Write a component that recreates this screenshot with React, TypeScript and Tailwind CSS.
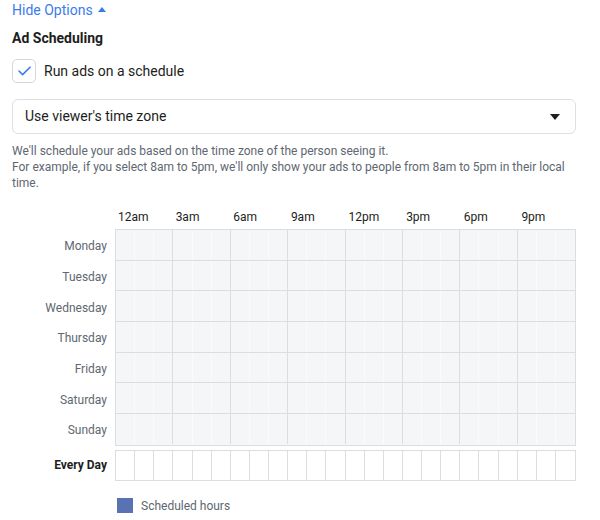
import React from "react";

const days = ["Monday", "Tuesday", "Wednesday", "Thursday", "Friday", "Saturday", "Sunday"];
const hours = ["12am", "3am", "6am", "9am", "12pm", "3pm", "6pm", "9pm"];
const cells = Array.from({ length: 24 }, (_, i) => i);

export default function App() {
  return (
    <div
      className="w-[600px] h-[520px] bg-white overflow-hidden pl-[12px] text-[#1c1e21]"
      style={{ fontFamily: "Roboto, 'Liberation Sans', Arial, sans-serif" }}
    >
      <div className="flex items-center h-[20px] text-[14px] text-[#3b7bec]">
        <span>Hide Options</span>
        <svg width="8" height="5" viewBox="0 0 8 5" className="ml-[5px] mb-[1px]">
          <path d="M0 5 L4 0 L8 5 Z" fill="#3b7bec" />
        </svg>
      </div>
      <div className="mt-[8px] h-[20px] flex items-center text-[14px] font-bold">Ad Scheduling</div>
      <div className="mt-[11px] flex items-center h-[24px]">
        <div className="w-[24px] h-[24px] rounded-[5px] border border-[#d3d6db] bg-white flex items-center justify-center">
          <svg width="13" height="10" viewBox="0 0 13 10">
            <path d="M1 5 L4.6 8.6 L12 1.2" fill="none" stroke="#3b7bec" strokeWidth="1.6" strokeLinecap="round" strokeLinejoin="round" />
          </svg>
        </div>
        <span className="ml-[8px] text-[14px] text-[#1c1e21]">Run ads on a schedule</span>
      </div>
      <div className="mt-[16px] w-[564px] h-[35px] rounded-[6px] border border-[#dddfe2] flex items-center justify-between pl-[12px] pr-[15px] text-[14px]">
        <span>Use viewer's time zone</span>
        <svg width="10" height="6" viewBox="0 0 10 6">
          <path d="M0 0 L10 0 L5 6 Z" fill="#1c1e21" />
        </svg>
      </div>
      <div className="mt-[9px] w-[563px] text-[12px] leading-[16px] text-[#606770]">
        <div>We'll schedule your ads based on the time zone of the person seeing it.</div>
        <div>For example, if you select 8am to 5pm, we'll only show your ads to people from 8am to 5pm in their local time.</div>
      </div>
      <div className="mt-[18px] flex">
        <div className="w-[103px]" />
        <div className="w-[461px] grid grid-cols-8 text-[12px] text-[#1c1e21] h-[16px] leading-[16px]">
          {hours.map((h) => (
            <div key={h} className="pl-[3px]">{h}</div>
          ))}
        </div>
      </div>
      <div className="mt-[4px] flex">
        <div className="w-[103px] flex flex-col pt-[2px]">
          {days.map((d) => (
            <div key={d} className="h-[30.7px] flex items-center justify-end pr-[8px] text-[12px] text-[#606770]">
              {d}
            </div>
          ))}
        </div>
        <div className="w-[461px] border border-[#dadde1] bg-[#f5f6f7]">
          {days.map((d, r) => (
            <div
              key={d}
              className={
                r < 6
                  ? "h-[30.7px] grid grid-cols-[repeat(24,minmax(0,1fr))] border-b border-[#dadde1]"
                  : "h-[29.7px] grid grid-cols-[repeat(24,minmax(0,1fr))]"
              }
            >
              {cells.map((c) =>
                c === 23 ? (
                  <div key={c} />
                ) : c % 3 === 2 ? (
                  <div key={c} className="border-r border-[#dadde1]" />
                ) : (
                  <div key={c} className="border-r border-[#fbfbfc]" />
                )
              )}
            </div>
          ))}
        </div>
      </div>
      <div className="mt-[4px] flex">
        <div className="w-[103px] h-[31px] flex items-center justify-end pr-[8px] text-[12px] font-bold text-[#1c1e21]">
          Every Day
        </div>
        <div className="w-[461px] h-[31px] border border-[#dadde1] bg-white grid grid-cols-[repeat(24,minmax(0,1fr))]">
          {cells.map((c) =>
            c === 23 ? <div key={c} /> : <div key={c} className="border-r border-[#dadde1]" />
          )}
        </div>
      </div>
      <div className="mt-[16px] flex items-center">
        <div className="w-[105px]" />
        <div className="w-[16px] h-[15px] bg-[#5872b4]" />
        <span className="ml-[8px] text-[12px] text-[#606770]">Scheduled hours</span>
      </div>
    </div>
  );
}
